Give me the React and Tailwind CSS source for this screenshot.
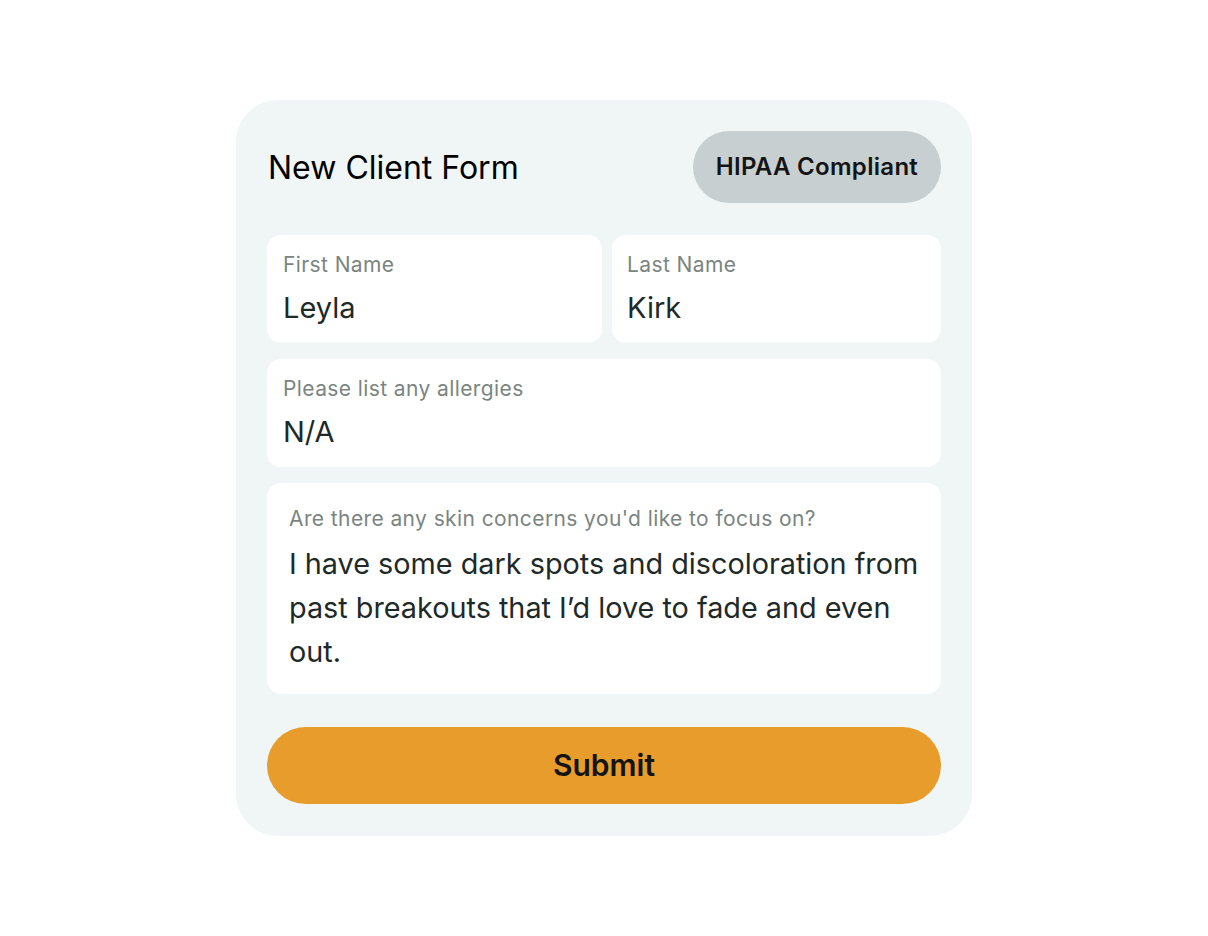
export default function App() {
  const font = { fontFamily: "Inter, 'Noto Sans', sans-serif" };
  return (
    <div className="w-[1208px] h-[936px] bg-white flex items-start justify-center pt-[100px]" style={font}>
      <div className="w-[736px] rounded-[42px] bg-[#f0f5f5] px-[31px] pt-[31px] pb-[32px] flex flex-col">
        <div className="flex items-center justify-between">
          <h1 className="text-[32px] text-black font-normal pl-[1px] pt-[1px]">New Client Form</h1>
          <div className="h-[72px] w-[248px] rounded-full bg-[#c8cfd0] flex items-center justify-center text-[24px] tracking-[0.3px] font-semibold text-[#141414]">
            HIPAA Compliant
          </div>
        </div>
        <div className="mt-[32px] flex gap-[10px]">
          <div className="flex-1 h-[108px] rounded-[14px] bg-white px-[16px] pt-[14px]">
            <div className="text-[21px] tracking-[0.4px] text-[#7a8581]">First Name</div>
            <div className="mt-[5px] text-[29px] text-[#1e2a27]">Leyla</div>
          </div>
          <div className="w-[329px] h-[108px] rounded-[14px] bg-white px-[15px] pt-[14px]">
            <div className="text-[21px] tracking-[0.4px] text-[#7a8581]">Last Name</div>
            <div className="mt-[5px] text-[29px] text-[#1e2a27]">Kirk</div>
          </div>
        </div>
        <div className="mt-[16px] h-[108px] rounded-[14px] bg-white px-[16px] pt-[14px]">
          <div className="text-[21px] tracking-[0.4px] text-[#7a8581]">Please list any allergies</div>
          <div className="mt-[5px] text-[29px] text-[#1e2a27]">N/A</div>
        </div>
        <div className="mt-[16px] h-[211px] rounded-[14px] bg-white px-[22px] pt-[20px]">
          <div className="text-[21px] tracking-[0.4px] text-[#7a8581]">Are there any skin concerns you'd like to focus on?</div>
          <div className="mt-[7px] text-[28.8px] leading-[44px] text-[#1e2a27]">
            I have some dark spots and discoloration from past breakouts that I’d love to fade and even out.
          </div>
        </div>
        <button className="mt-[33px] h-[77px] rounded-full bg-[#e89c2c] text-[30px] font-semibold text-[#141414]">
          Submit
        </button>
      </div>
    </div>
  );
}
